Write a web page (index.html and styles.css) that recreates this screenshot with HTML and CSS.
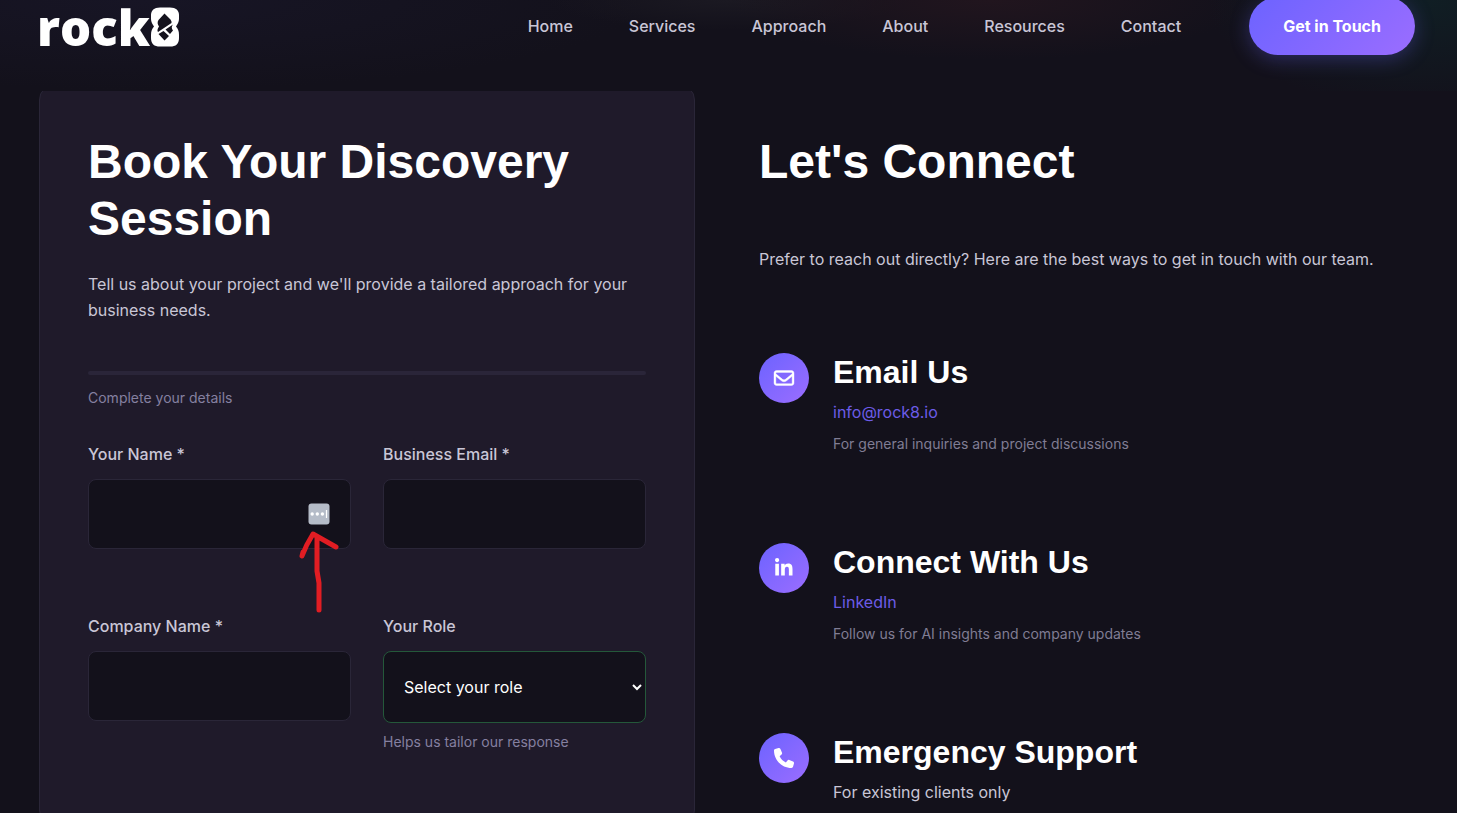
FILE: index.html
```html
<!DOCTYPE html>
<html lang="en">
<head>
<meta charset="utf-8">
<meta name="viewport" content="width=device-width, initial-scale=1">
<title>rock8 - Contact</title>
<link rel="stylesheet" href="styles.css">
</head>
<body>
<div class="page">
  <header class="header">
    <a class="logo" href="#" aria-label="rock8">
      <span class="logo-text">rock</span>
      <svg class="logo-mark" viewBox="0 0 30 40" aria-hidden="true">
        <path fill="#fff" d="M10 0.500H20C26 0.500 29 3.500 29 8V12C29 15 27.500 17 26 19.500C28 22 29 24 29 28V31C29 37 26 39.500 20 39.500H10C4 39.500 1 37 1 31V28C1 24 2 22 4 19.500C2.500 17 1 15 1 12V8C1 3.500 4 0.500 10 0.500Z"/>
        <path fill="#14121d" d="M14.500 6.500L20.500 12.500Q22 14.500 21.500 16L8 25Q6.500 23 9 19.500Q6.500 16 8.500 13Z"/>
        <path fill="#14121d" d="M8.500 27L13.500 24L19 29L14.500 33.500ZM15.500 22.500L23 17.500Q20.500 20.500 23 23.500L20 27Z"/>
      </svg>
    </a>
    <nav class="nav">
      <a href="#">Home</a>
      <a href="#">Services</a>
      <a href="#">Approach</a>
      <a href="#">About</a>
      <a href="#">Resources</a>
      <a href="#">Contact</a>
    </nav>
    <a class="cta" href="#">Get in Touch</a>
  </header>

  <main class="main">
    <section class="card">
      <h2>Book Your Discovery Session</h2>
      <p class="intro">Tell us about your project and we'll provide a tailored approach for your business needs.</p>
      <div class="progress"></div>
      <p class="hint progress-label">Complete your details</p>
      <form class="form">
        <div class="field">
          <label for="name">Your Name *</label>
          <div class="control">
            <input id="name" type="text">
            <svg class="autofill" viewBox="0 0 22 22" aria-hidden="true">
              <rect x="0.500" y="0.500" width="21" height="21" rx="3" fill="#b5bcc8"/>
              <circle cx="4.200" cy="11" r="1.700" fill="#fff"/><circle cx="9.300" cy="11" r="1.700" fill="#fff"/><circle cx="14.400" cy="11" r="1.700" fill="#fff"/>
              <path d="M18.500 7V15" stroke="#fff" stroke-width="1.200"/>
            </svg>
            <svg class="arrow" viewBox="0 0 44 88" aria-hidden="true">
              <path d="M22 10V44L24 56V83M7 29Q11 18 18 7L41 20M7 29L8 25" fill="none" stroke="#e11d23" stroke-width="5" stroke-linecap="round" stroke-linejoin="round"/>
            </svg>
          </div>
        </div>
        <div class="field">
          <label for="email">Business Email *</label>
          <input id="email" type="email">
        </div>
        <div class="field">
          <label for="company">Company Name *</label>
          <input id="company" type="text">
        </div>
        <div class="field">
          <label for="role">Your Role</label>
          <select id="role"><option>Select your role</option></select>
          <p class="hint">Helps us tailor our response</p>
        </div>
      </form>
    </section>

    <section class="connect">
      <h2>Let's Connect</h2>
      <p class="lead">Prefer to reach out directly? Here are the best ways to get in touch with our team.</p>
      <div class="methods">
        <article class="method">
          <span class="badge"><svg viewBox="0 0 512 512" aria-hidden="true"><path fill="#fff" stroke="#fff" stroke-width="10" d="M64 112c-9 0-16 7-16 16v22l172 141c21 17 51 17 72 0l172-141v-22c0-9-7-16-16-16H64zM48 212v172c0 9 7 16 16 16h384c9 0 16-7 16-16V212L322 329c-38 31-93 31-132 0L48 212zM0 128c0-35 29-64 64-64h384c35 0 64 29 64 64v256c0 35-29 64-64 64H64c-35 0-64-29-64-64V128z"/></svg></span>
          <div class="details">
            <h3>Email Us</h3>
            <a href="#">info@rock8.io</a>
            <p class="note">For general inquiries and project discussions</p>
          </div>
        </article>
        <article class="method">
          <span class="badge"><svg viewBox="0 0 448 512" aria-hidden="true"><path fill="#fff" d="M100 448H7V149h93v299zM54 108C24 108 0 83 0 54a54 54 0 0 1 108 0c0 29-25 54-54 54zM448 448h-93V302c0-34-1-79-48-79-49 0-56 38-56 77v148h-93V149h89v41h1c13-24 43-48 88-48 94 0 112 62 112 142v164z"/></svg></span>
          <div class="details">
            <h3>Connect With Us</h3>
            <a href="#">LinkedIn</a>
            <p class="note">Follow us for AI insights and company updates</p>
          </div>
        </article>
        <article class="method">
          <span class="badge"><svg viewBox="0 0 512 512" aria-hidden="true"><path fill="#fff" d="M165 25c-8-19-28-29-48-24L29 25C12 30 0 46 0 64c0 247 201 448 448 448 18 0 34-12 39-29l24-88c5-20-5-40-24-48l-96-40c-16-7-35-2-46 12l-41 49c-70-33-127-90-160-160l49-41c14-11 19-30 12-46l-40-96z"/></svg></span>
          <div class="details">
            <h3>Emergency Support</h3>
            <p class="availability">For existing clients only</p>
          </div>
        </article>
      </div>
    </section>
  </main>
</div>
</body>
</html>
```
FILE: styles.css
```css
* { box-sizing: border-box; }
body { margin: 0; background: #13111b; color: #c9c6d6; font: 400 16px/26px Inter, sans-serif; }
h2, h3, p { margin: 0; }
a { text-decoration: none; }
.page { height: 100vh; overflow: hidden; display: flex; flex-direction: column; }
.header {
  position: relative; z-index: 1; flex: none; height: 91px; padding: 0 42px 39px 37px;
  display: flex; align-items: center;
  background:
    radial-gradient(ellipse 220px 110px at 98% 0, #101e24, transparent),
    radial-gradient(ellipse 260px 60px at 68% 0, #21151e, transparent),
    radial-gradient(ellipse 180px 30px at 50% 0, #1b1922, transparent),
    radial-gradient(ellipse 500px 90px at 10% 0, #171525, transparent),
    #13111b;
}
.logo { display: flex; align-items: center; color: #fff; }
.logo-text { font: 800 49px/52px "Open Sans", sans-serif; padding-top: 2px; }
.logo-mark { width: 30px; height: 40px; margin-top: 2px; }
.nav { margin-left: auto; display: flex; gap: 56px; }
.nav a { color: #c9c6d6; font-weight: 500; }
.cta {
  margin-left: 68px; padding: 16px 34px; border-radius: 29px; color: #fff; font-weight: 700;
  background: linear-gradient(135deg, #6c63ff, #9b6dff); box-shadow: 0 4px 20px rgba(108, 99, 255, .3);
}
.main { flex: none; display: grid; grid-template-columns: 1fr 1fr; gap: 64px; padding: 0 42px 0 39px; margin-top: -7px; }
h2 { color: #fff; font: 700 48px/57px "Liberation Sans", Arial, sans-serif; }
.card { padding: 48px 48px 72px; border: 1px solid #2a2638; border-radius: 16px; background: #1f1a2a; }
.intro { margin-top: 24px; }
.progress { height: 4px; margin-top: 48px; border-radius: 2px; background: #2a2539; }
.hint, .note { color: #8580a0; font-size: 14px; line-height: 22px; }
.progress-label { margin-top: 12px; }
.form { margin-top: 32px; display: grid; grid-template-columns: 1fr 1fr; gap: 64px 32px; }
.field { display: flex; flex-direction: column; min-width: 0; }
.field label { margin-bottom: 12px; font-weight: 500; }
.field input, .field select {
  width: 100%; height: 70px; padding: 0 20px; border: 1px solid #2a2638; border-radius: 8px;
  background: #13111b; color: #fff; font: inherit;
}
.field select { height: 72px; padding: 0 0 0 16px; border-color: #24583a; }
.field .hint { margin-top: 8px; }
.control { position: relative; }
.control input { display: block; }
.autofill { position: absolute; top: 24px; right: 21px; width: 22px; height: 22px; }
.arrow { position: absolute; top: 48px; right: 12px; width: 44px; height: 88px; }
.connect { padding-top: 49px; }
.lead { margin-top: 56px; }
.methods { margin-top: 81px; display: flex; flex-direction: column; gap: 88px; }
.method { display: flex; gap: 24px; }
.badge {
  flex: none; width: 50px; height: 50px; border-radius: 50%; display: flex; align-items: center; justify-content: center;
  background: linear-gradient(135deg, #6c63ff, #9b6dff);
}
.badge svg { height: 20px; overflow: visible; }
h3 { margin-bottom: 8px; color: #fff; font: 700 32px/38px "Liberation Sans", Arial, sans-serif; }
.details a { color: #6c5ce7; }
.note { margin-top: 8px; color: #807d94; }
```
